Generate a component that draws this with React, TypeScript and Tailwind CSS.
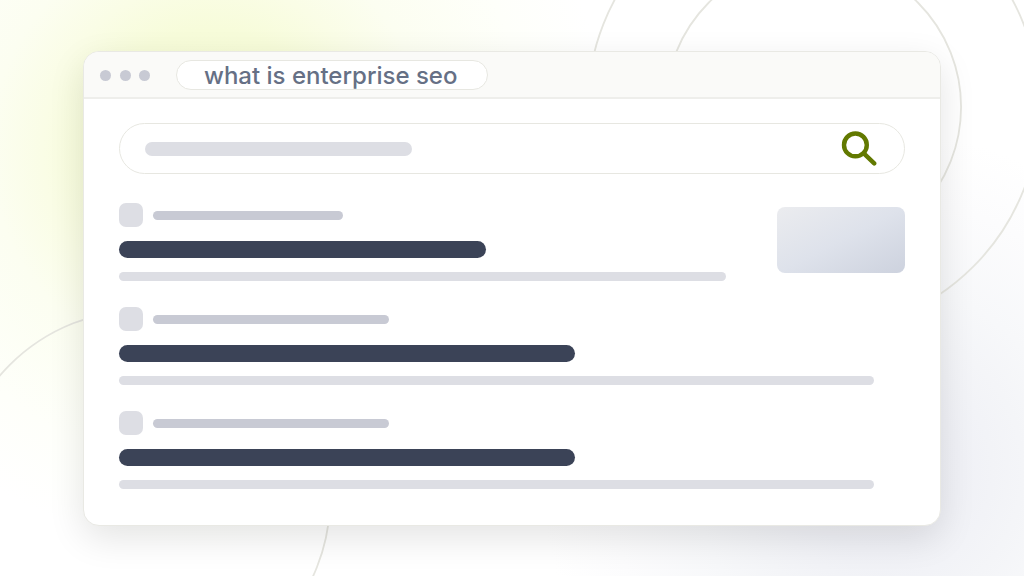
import React from "react";

type Result = { id: number; source: string; title: string; thumbnail?: boolean };

const results: Result[] = [
  { id: 1, source: "w-[190px]", title: "w-[367px]", thumbnail: true },
  { id: 2, source: "w-[236px]", title: "w-[456px]" },
  { id: 3, source: "w-[236px]", title: "w-[456px]" },
];

function Backdrop() {
  return (
    <div className="absolute inset-0 -z-10 overflow-hidden bg-white" aria-hidden="true">
      <div className="absolute inset-0 bg-[radial-gradient(circle_400px_at_210px_150px,#f5fbd0_0%,#f7fcda_30%,#fafde6_42%,#fcfef1_55%,#fefffa_80%,#ffffff00_100%)]" />
      <div className="absolute inset-0 bg-[radial-gradient(circle_340px_at_880px_470px,#edeef4_0%,#f0f1f6_24%,#f4f5f8_42%,#f7f8fa_55%,#fcfcfd_80%,#ffffff00_100%)]" />
      <svg
        className="absolute inset-0 h-full w-full"
        viewBox="0 0 1024 576"
        preserveAspectRatio="xMidYMid slice"
        fill="none"
        stroke="#e5e5df"
        strokeWidth="1.8"
      >
        <circle cx="812.8" cy="106.8" r="147.5" />
        <circle cx="813" cy="106.8" r="225.5" />
        <circle cx="143" cy="497" r="187.5" />
      </svg>
    </div>
  );
}

function SearchIcon() {
  return (
    <svg
      className="size-9"
      viewBox="0 0 36 36"
      fill="none"
      stroke="#627900"
      strokeWidth="4.4"
      strokeLinecap="round"
      aria-hidden="true"
    >
      <circle cx="14.4" cy="13.9" r="11.4" />
      <path d="M22.8 22.3 33.2 32.4" />
    </svg>
  );
}

function TitleBar() {
  return (
    <header className="flex items-center border-b-2 border-[#eeeeeb] bg-[#fafaf8] px-4 pt-2 pb-[7px]">
      <div className="flex w-[50px] justify-between" aria-hidden="true">
        <span className="size-[11px] rounded-full bg-[#c8cad4]" />
        <span className="size-[11px] rounded-full bg-[#c8cad4]" />
        <span className="size-[11px] rounded-full bg-[#c8cad4]" />
      </div>
      <input
        type="text"
        aria-label="Address"
        defaultValue="what is enterprise seo"
        className="ml-[26px] h-[30px] w-[312px] rounded-full border border-[#e7e7e1] bg-white pr-5 pl-[27px] font-['Inter',sans-serif] text-[24px] leading-7 font-medium text-[#667085] outline-none"
      />
    </header>
  );
}

function ResultItem({ source, title, thumbnail }: Result) {
  return (
    <li className="flex items-start gap-[51px]">
      <div className="flex-1">
        <div className="flex items-center gap-[10px]">
          <span className="size-6 rounded-[7px] bg-[#dddee4]" />
          <span className={`h-[9px] rounded-full bg-[#c8cad4] ${source}`} />
        </div>
        <div className={`mt-[14px] h-[17px] max-w-full rounded-full bg-[#3b4357] ${title}`} />
        <div
          className={`mt-[14px] h-[9px] rounded-full bg-[#dddee4] ${thumbnail ? "w-full" : "w-[96%]"}`}
        />
      </div>
      {thumbnail && (
        <div className="mt-1 h-[66px] w-32 rounded-lg bg-linear-to-br from-[#ebecef] via-[#dee2eb] to-[#cdd2de]" />
      )}
    </li>
  );
}

export default function App() {
  return (
    <main className="relative isolate min-h-screen px-[83px] py-[51px]">
      <Backdrop />
      <section className="overflow-hidden rounded-2xl border border-[#e9e9e4] bg-white shadow-[0_12px_36px_rgba(0,0,0,0.11)]">
        <TitleBar />
        <div className="px-[35px] pt-6 pb-9">
          <form
            className="relative flex h-[51px] items-center rounded-full border border-[#e7e7e1] pr-[27px]"
            onSubmit={(event) => event.preventDefault()}
          >
            <input
              type="search"
              aria-label="Search"
              className="h-full min-w-0 flex-1 rounded-full bg-transparent outline-none"
            />
            <span className="pointer-events-none absolute left-[25px] h-[14px] w-[267px] rounded-full bg-[#dddee4]" />
            <button type="submit" aria-label="Search">
              <SearchIcon />
            </button>
          </form>
          <ul className="mt-[29px] flex flex-col gap-[26px]">
            {results.map((result) => (
              <ResultItem key={result.id} {...result} />
            ))}
          </ul>
        </div>
      </section>
    </main>
  );
}
